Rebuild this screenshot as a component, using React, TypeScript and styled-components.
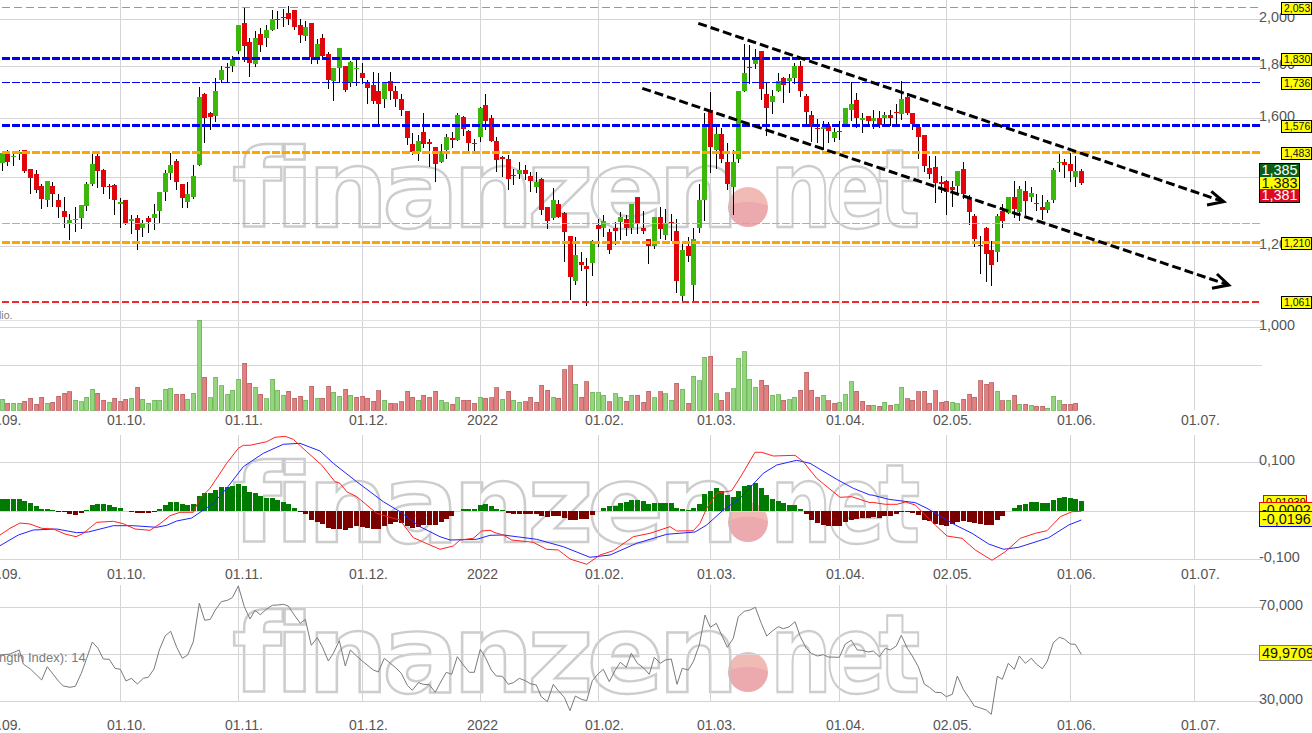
import React from "react";
import styled, { createGlobalStyle } from "styled-components";

const GlobalStyle = createGlobalStyle`
  html, body { margin: 0; padding: 0; background: #fff; overflow: hidden; }
  body { font-family: "Liberation Sans", Arial, sans-serif; }
`;

const Page = styled.main`
  width: 1312px;
  height: 733px;
  display: flex;
  flex-direction: column;
  overflow: hidden;
  background: #fff;
`;
const Panel = styled.section<{ $h: number; $mt?: number }>`
  position: relative;
  flex: none;
  height: ${(p) => p.$h}px;
  margin-top: ${(p) => p.$mt ?? 0}px;
`;
const ChartSvg = styled.svg`
  position: relative;
  z-index: 1;
  display: block;
  width: 1312px;
  height: 100%;
  overflow: visible;
`;
const AxisValue = styled.text`
  font-family: "Liberation Sans", Arial, sans-serif;
  font-size: 14.4px;
  fill: #555;
`;
const Watermark = styled.div<{ $top: number }>`
  position: absolute;
  z-index: 0;
  left: 232px;
  top: ${(p) => p.$top}px;
  display: flex;
  align-items: baseline;
  font-family: "DejaVu Sans", sans-serif;
  font-weight: 700;
  font-size: 109px;
  line-height: 109px;
  letter-spacing: -6.5px;
  color: transparent;
  -webkit-text-stroke: 2.4px rgba(192, 192, 194, 0.8);
  white-space: nowrap;
`;
const WatermarkHead = styled.span`
  display: inline-block;
  transform: scaleX(1.05);
  transform-origin: 0 100%;
`;
const WatermarkTail = styled.span`
  display: inline-block;
  letter-spacing: -8px;
  transform: scaleX(0.8);
  transform-origin: 0 100%;
`;
const WatermarkDot = styled.span`
  display: inline-block;
  width: 40px;
  height: 40px;
  margin: 0 2px 0 19px;
  border-radius: 50%;
  background: radial-gradient(ellipse 95% 72% at 50% 108%, #eca9ae 97%, #f0bbb4 100%);
  -webkit-text-stroke: 0;
`;
const AxisRow = styled.div<{ $h: number; $pt?: number }>`
  flex: none;
  box-sizing: border-box;
  height: ${(p) => p.$h}px;
  padding-top: ${(p) => p.$pt ?? 0}px;
  display: flex;
  align-items: center;
  font-size: 14px;
  color: #555;
  margin-left: -2px;
  white-space: nowrap;
`;
const TickLabel = styled.span<{ $w: number }>`
  flex: none;
  width: ${(p) => p.$w}px;
`;
const LevelTag = styled.div<{ $top: number }>`
  position: absolute;
  z-index: 2;
  left: 1281px;
  right: 0;
  top: ${(p) => p.$top}px;
  height: 11px;
  border: 1px solid #000;
  background: #ffff00;
  color: #111;
  font-size: 10.5px;
  line-height: 11px;
  padding-left: 2px;
`;
const PriceStack = styled.div`
  position: absolute;
  z-index: 3;
  left: 1259px;
  top: 163px;
  width: 39px;
  display: flex;
  flex-direction: column;
  border: 1px solid #000;
`;
const PriceCell = styled.div<{ $bg: string; $fg: string }>`
  height: 12.67px;
  background: ${(p) => p.$bg};
  color: ${(p) => p.$fg};
  font-size: 14.4px;
  line-height: 13px;
  text-align: center;
`;
const ValueTag = styled.div<{ $left: number; $top: number; $h: number; $border: string; $size: number; $z: number }>`
  position: absolute;
  z-index: ${(p) => p.$z};
  left: ${(p) => p.$left}px;
  right: ${(p) => (p.$left > 1260 ? 5 : -4)}px;
  top: ${(p) => p.$top}px;
  height: ${(p) => p.$h}px;
  border: 1px solid ${(p) => p.$border};
  background: #ffff00;
  color: #111;
  font-size: ${(p) => p.$size}px;
  line-height: ${(p) => p.$h}px;
  padding-left: 2px;
  overflow: hidden;
  white-space: nowrap;
`;
const Legend = styled.div<{ $top: number; $size: number }>`
  position: absolute;
  z-index: 2;
  left: -1px;
  top: ${(p) => p.$top}px;
  color: #7c7c7c;
  font-size: ${(p) => p.$size}px;
  line-height: 14px;
  white-space: nowrap;
`;

const GRID_V = [120.5, 238.5, 362.5, 480.5, 598.5, 710.5, 839.5, 946.5, 1070.5, 1194.5];
const GRID = "#d4d4d8";

const GREEN = "#3cb80a";
const RED = "#e0060c";

// candles: zoomX colour bodyTop bodyBottom wickTop wickBottom
const CANDLES: [number, string][] = [
  [0, `7g460,488,460,512 22r455,485,450,497 40g467,470,460,497 57g455,462,450,480 73r450,513,450,518 91r507,533,507,581 109r522,570,510,580 124r558,597,552,627 142g543,600,543,622 157r558,582,545,620 175r600,621,583,653 193r633,651,590,683 208g660,670,642,720 226g657,659,621,695 244g615,654,615,687 259g552,618,546,633 277g492,552,462,558 292r468,513,462,564 310r510,561,507,582 328r558,561,552,597 343r555,600,552,645 361g606,611,594,683 376r600,669,600,675 394g657,663,645,702 412r654,690,645,750 427g670,684,660,711 445r654,666,648,699 463g642,654,612,690 478g576,633,576,672 496g519,576,510,603 511g495,519,458,540 529r483,546,477,570 547r552,594,552,624 562g582,606,546,624 580g528,591,495,597 598g291,495,261,498 613r282,354,279,429 631r339,351,336,390 646g273,348,234,366 664g210,240,198,250 682r201,204,190,247 697g178,198,168,216 715g75,153,75,162 733r69,138,22,186 748r126,189,114,231 766g114,192,93,201 781r102,135,84,156 799g90,114,75,141 817g57,90,30,93 832r57,60,33,87 850r51,54,27,81 865r39,57,18,75 883r30,81,30,90 901r75,105,57,129 916g81,108,63,123 934r69,171,69,192 952g132,171,117,192 967r114,168,102,180 985r162,240,156,267 1000g204,243,204,303 1018g144,204,144,246 1036r198,270,198,276 1051g186,249,183,261 1069g203,207,180,258 1087r219,234,189,252 1102r249,264,240,312 1120r255,303,216,312 1135r273,312,219,375 1153g249,297,249,324 1171r243,273,216,300 1186r273,297,258,321 1204r297,330,282,348 1222r333,414,333,435 1237r432,456,400,465 1255g423,456,405,483 1270r396,432,340,444 1288r426,431,417,501 1306r441,492,441,546`],
  [440, `2g453,486,432,490 19g411,450,402,477 37r414,419,396,444 52g345,420,339,423 70r351,387,348,408 85r393,429,390,453 103r429,431,417,454 121g324,411,321,426 136r315,363,282,390 154r354,423,345,426 169r423,480,411,516 187r471,476,468,531 205r477,537,465,570 220r525,528,507,555 238g510,522,487,537 256r510,522,495,540 271r528,543,516,576 289g546,561,516,579 304r537,630,534,645 322r621,663,621,687 340g600,654,564,660 355r612,651,600,654 373r639,696,636,786 391r708,831,708,900 406g765,843,711,855 424r786,795,756,813 439r798,807,774,918 457g723,789,720,828 475r675,687,657,741 490g663,684,645,711 508r696,750,687,762 526r684,693,666,735 541g651,666,636,720 559r657,684,645,708 574g612,684,612,702 592r591,670,591,702 610r684,693,633,702 625r717,738,717,792 643g651,738,651,747 661r651,687,621,717 676g671,705,627,720 694r666,668,642,723 709r693,843,657,879 727g750,888,732,906 745r738,768,711,786 760g717,855,684,903 778g600,684,552,700 793g378,600,339,663 811r330,441,276,519 829g402,450,381,507 844r402,477,384,489 862r486,552,429,570 880g486,561,450,645 895g273,477,273,489 913g219,273,132,276 928r201,204,135,252 946g177,192,147,207 964r153,267,153,300 979r282,324,249,408 997g288,306,270,342 1015g243,273,219,276 1030r234,255,231,309 1048g234,243,222,279 1063g198,234,189,252 1081r198,273,183,291 1099r288,336,282,372 1114r345,381,333,426 1132r384,387,357,429 1150g381,387,363,450 1165r378,393,366,429 1183g396,414,384,426 1198r393,396,363,420 1216g324,372,324,380 1234g312,330,246,363 1249r300,354,279,384 1267g354,360,339,399 1285r348,363,348,375`],
  [872, `4g354,363,330,387 22r354,375,333,384 37g345,354,336,372 55r345,354,330,378 73r336,339,312,372 88g297,342,243,360 106r291,339,279,345 121r339,372,339,390 139r381,411,372,477 157r405,498,405,516 172r504,522,468,537 190r501,549,468,609 208r546,552,528,580 223r543,576,540,645 241r561,570,543,621 256g513,558,513,582 274r507,582,486,597 292r591,636,585,675 307r648,717,642,741 325r735,738,708,822 343r684,762,681,846 358r750,795,723,858 376g648,756,642,786 391r633,663,612,684 409g591,639,591,642 427r591,627,543,654 442g567,636,558,663 460r573,603,543,645 478g579,591,561,606 493r609,611,582,633 511r621,630,585,660 526g606,630,600,639 544g510,600,504,609 562g486,488,459,516 577r486,495,477,534 595r492,513,459,546 610g513,531,468,561 628r513,549,507,555`],
];

// volume: zoomX colour top (baseline 270)
const VOLUME: [number, string][] = [
  [0, `7g238 22r250 40g250 57g250 73r244 91r234 109r252 124r232 142g250 157r247 175r229 193r220 208r215 226g240 244g245 259g232 277g208 292r220 310r240 328g247 343r235 361r244 376r238 394g234 412r202 427g237 445g250 463g240 478g241 496g208 511g204 529r223 547r223 562g238 580g220 598g0 613r171 631g233 646g172 664g197 682g223 697g210 715g178 733r130 748r190 766g202 781r223 799g236 817g177 832g210 850g226 865r214 883r234 901r229 916g240 934r199 952g234 967r235 985r199 1000g217 1018g229 1036r208 1051g225 1069r232 1087r229 1102r234 1120r243 1135r212 1153g241 1171r249 1186r251 1204r245 1222r214 1237r232 1255g241 1270r226 1288r232 1306r214`],
  [440, `2g240 19g248 37r252 52g232 70r240 85r240 103r250 121g232 136r235 154r233 169r203 187g238 205r214 220g240 238g246 256r245 271r232 289r247 304r196 322r210 340g232 355r235 373r149 391r137 406g192 424r232 439r185 457g217 475g218 490g226 508r245 526g221 541g232 559r243 574g226 592r225 610r247 625r214 643g233 661r215 676g221 694g240 709r190 727g208 745r250 760g168 778g182 793g112 811r109 829g221 844r240 862r218 880g206 895g115 913g95 928g178 946g202 964r181 979r195 997g226 1015g224 1030r241 1048g239 1063g232 1081r211 1099r156 1114r211 1132r232 1150g226 1165r242 1183r250 1198g246 1216g222 1234g185 1249r214 1267r244 1285r256`],
  [872, `4g256 22r259 37g247 55r256 73g253 88g202 106r236 121r241 139r215 157r214 172r250 190r212 208r247 223r244 241g247 256g251 274r238 292r223 307r232 325r182 343r193 358r188 376g214 391r242 409g241 427r226 442g253 460r252 478g256 493r259 511r259 526g265 544g229 562g242 577r253 595r253 610r250`],
];

// MACD histogram: zoomX value, zero at 574
const HIST: [number, string][] = [
  [0, `7:537 22:537 40:537 57:537 73:543 91:548 109:558 124:567 142:567 157:570 175:576 193:577 208:581 226:584 244:579 259:571 277:556 292:552 310:552 328:555 343:561 361:564 394:577 412:579 427:579 445:579 463:576 478:568 496:556 511:546 529:546 547:552 562:554 580:552 598:528 613:519 631:519 646:510 664:501 682:501 697:498 715:492 733:498 748:516 766:519 781:528 799:534 817:534 832:540 850:546 865:552 883:564 901:577 916:582 934:600 952:606 967:612 985:624 1000:628 1018:628 1036:630 1051:624 1069:618 1087:621 1102:624 1120:627 1135:627 1153:618 1171:612 1186:606 1204:609 1222:618 1237:624 1255:621 1270:615 1288:615 1306:615`],
  [440, `2:606 19:597 34:588 70:567 85:567 103:567 121:555 136:552 154:558 169:567 187:571 205:579 220:582 238:582 256:582 271:582 289:582 304:588 322:591 340:588 355:588 373:594 391:600 406:600 424:597 439:597 457:585 490:564 508:559 526:558 541:549 559:546 574:540 592:540 610:543 625:552 643:549 661:549 676:549 694:549 709:564 727:567 745:570 760:564 778:552 793:522 811:513 829:504 844:513 862:525 880:531 895:513 913:498 928:495 946:489 964:504 979:525 997:537 1015:543 1030:549 1048:555 1063:555 1081:567 1099:582 1114:600 1132:609 1150:615 1165:618 1183:618 1198:618 1216:606 1234:600 1249:597 1267:594 1285:594`],
  [872, `4:591 22:594 37:587 55:587 73:582 88:576 106:576 121:579 139:585 157:600 172:603 190:612 208:615 223:618 241:612 256:606 274:603 292:606 307:609 325:612 343:615 358:615 376:600 391:588 427:564 442:555 460:552 478:546 493:546 511:549 526:549 544:540 562:534 577:531 595:534 610:537 628:543`],
];

const MACD_RED: [number, string][] = [
  [0, `0,645 30,625 60,609 90,612 125,625 160,627 195,642 228,650 250,640 290,607 340,604 370,611 405,627 450,631 480,611 510,587 540,577 580,577 600,535 630,505 680,430 715,385 730,376 750,376 800,365 825,352 855,349 880,358 920,395 965,435 1005,485 1020,490 1040,515 1070,530 1130,580 1170,592 1200,600 1240,653 1290,675 1320,688`],
  [440, `40,678 60,660 100,655 125,633 150,631 165,638 190,645 215,660 280,667 320,688 355,690 390,717 440,733 480,705 520,692 580,650 630,640 690,620 710,633 760,632 780,610 800,565 830,520 875,512 905,465 945,397 965,397 1000,408 1065,406 1090,425 1130,475 1200,532 1235,530 1290,548`],
  [872, `0,547 40,553 75,553 100,546 130,555 190,615 225,648 270,655 310,690 360,721 400,695 445,655 490,640 525,632 565,590 600,575 628,574`],
];
const MACD_BLUE: [number, string][] = [
  [0, `0,677 55,645 100,630 170,627 230,638 265,636 340,617 400,617 470,622 500,616 530,603 575,594 640,550 680,505 730,440 790,400 850,373 900,370 960,393 1000,430 1070,485 1150,545 1200,575 1260,620 1320,650`],
  [440, `30,660 110,658 150,646 190,645 290,658 370,680 450,712 510,705 590,670 680,643 765,636 800,615 850,570 900,535 970,460 1010,435 1070,421 1110,430 1190,478 1240,505 1290,525`],
  [872, `0,525 50,538 130,548 165,565 250,615 300,640 350,672 395,688 440,682 530,653 590,615 628,600`],
];
const RSI: [number, string][] = [
  [0, `0,255 30,252 58,240 70,282 92,298 125,330 142,290 175,333 190,348 210,352 226,349 244,310 260,265 277,216 294,235 310,267 328,268 345,295 361,298 378,333 394,325 412,342 430,325 445,322 462,297 478,240 496,197 512,184 530,232 547,265 563,255 580,215 598,100 614,151 631,148 646,120 664,95 682,91 697,83 715,48 733,110 750,147 765,121 781,134 799,118 817,106 832,105 850,103 865,108 883,135 901,160 916,148 934,226 952,203 967,230 985,273 1000,250 1018,212 1036,288 1051,240 1069,257 1087,273 1120,300 1135,306 1153,265 1171,280 1186,292 1204,310 1222,346 1237,361 1255,338 1270,343 1288,344 1306,367 1320,340`],
  [440, `19,307 35,313 52,260 70,285 88,307 103,307 121,238 136,262 154,300 169,318 187,319 205,343 220,338 238,325 256,332 271,341 289,345 304,380 322,395 340,343 355,362 373,382 390,422 406,378 424,388 440,392 457,332 475,311 490,298 508,335 526,300 541,277 559,292 574,250 592,280 610,293 628,313 643,262 661,280 676,270 694,267 711,343 727,295 745,300 760,275 778,225 795,135 811,172 829,160 862,232 880,205 895,140 913,124 930,120 946,112 964,160 980,198 997,183 1015,170 1030,176 1048,170 1065,155 1081,200 1099,235 1114,250 1132,258 1150,254 1165,261 1198,262 1216,222 1234,211 1252,240 1267,241 1285,246`],
  [872, `4,243 22,260 40,235 55,240 73,228 88,196 106,235 121,258 139,290 157,342 172,352 190,367 208,368 223,380 241,373 256,318 274,358 292,385 307,408 325,414 343,420 358,433 376,319 391,328 409,280 427,298 442,258 460,280 478,265 493,282 511,296 526,274 544,218 562,202 577,207 595,222 610,223 628,253`],
];

const items = (segs: [number, string][]) =>
  segs.flatMap(([o, s]) => s.trim().split(/\s+/).map((t) => ({ o, t })));

const candles = items(CANDLES).map(({ o, t }) => {
  const m = t.match(/^(\d+)([gr])(\d+),(\d+),(\d+),(\d+)$/)!;
  return { x: o + +m[1] / 3, c: m[2], bt: +m[3] / 3, bb: +m[4] / 3, wt: +m[5] / 3, wb: +m[6] / 3 };
});
const volumes = items(VOLUME).map(({ o, t }) => {
  const m = t.match(/^(\d+)([gr])(\d+)$/)!;
  return { x: o + +m[1] / 3, c: m[2], top: +m[3] / 3 };
});
const hist = items(HIST).map(({ o, t }) => {
  const [a, b] = t.split(":").map(Number);
  return { x: o + a / 3, v: b };
});
const line = (segs: [number, string][], dy: number) =>
  items(segs)
    .map(({ o, t }) => {
      const [a, b] = t.split(",").map(Number);
      return `${(o + a / 3).toFixed(1)},${(b / 3 + dy).toFixed(1)}`;
    })
    .join(" ");

const LEVELS = [
  { y: 7.5, color: "#33e033", w: 1, dash: "8 4" },
  { y: 58.5, color: "#0000f5", w: 3, dash: "8 2" },
  { y: 82.5, color: "#0000f5", w: 1, dash: "8 2" },
  { y: 125.5, color: "#0000f5", w: 3, dash: "8 2" },
  { y: 152.5, color: "#ffa500", w: 3, dash: "8 2" },
  { y: 223.5, color: "#f5a623", w: 1, dash: "8 2" },
  { y: 242.5, color: "#ffa500", w: 3, dash: "8 2" },
  { y: 301.5, color: "#f02a2a", w: 2, dash: "7 3" },
];

const VGrid = ({ y1, y2 }: { y1: number; y2: number }) => (
  <g stroke={GRID} strokeWidth={1} shapeRendering="crispEdges">
    {GRID_V.map((x) => (
      <line key={x} x1={x} x2={x} y1={y1} y2={y2} />
    ))}
  </g>
);
const HGrid = ({ ys, color = GRID }: { ys: number[]; color?: string }) => (
  <g stroke={color} strokeWidth={1} shapeRendering="crispEdges">
    {ys.map((y) => (
      <line key={y} x1={0} x2={1262} y1={y} y2={y} />
    ))}
  </g>
);

const Candles = () => (
  <g shapeRendering="crispEdges">
    {candles.map((k, i) => {
      const cx = Math.round(k.x);
      const fill = k.c === "g" ? GREEN : RED;
      const top = Math.round(k.bt);
      return (
        <g key={i}>
          <rect x={cx} y={k.wt} width={1} height={k.wb - k.wt} fill="#000" />
          <rect x={cx - 2} y={top} width={5} height={Math.max(1, Math.round(k.bb) - top)} fill={fill} />
        </g>
      );
    })}
  </g>
);
const Volumes = () => (
  <g shapeRendering="crispEdges">
    {volumes.map((v, i) => {
      const up = v.c === "g";
      const top = 320 + v.top;
      return (
        <rect
          key={i}
          x={Math.round(v.x) - 1.5}
          y={top}
          width={4}
          height={410 - top}
          fill={up ? "#93d67e" : "#e68080"}
          stroke={up ? "#6cb356" : "#b86464"}
          strokeOpacity={0.8}
        />
      );
    })}
  </g>
);
const Histogram = ({ zero }: { zero: number }) => (
  <g shapeRendering="crispEdges">
    {hist.map((b, i) => {
      const y = b.v / 3 - 115;
      const up = b.v < 574;
      return (
        <rect
          key={i}
          x={Math.round(b.x) - 2}
          y={up ? y : zero}
          width={5}
          height={Math.abs(y - zero)}
          fill={up ? "#007a00" : "#7a0000"}
        />
      );
    })}
  </g>
);
const Arrow = ({ x1, y1, x2, y2, a, b }: { x1: number; y1: number; x2: number; y2: number; a: number[]; b: number[] }) => (
  <g fill="none" stroke="#000" strokeWidth={3}>
    <line x1={x1} y1={y1} x2={x2} y2={y2} strokeDasharray="9 4" />
    <polyline points={`${a[0]},${a[1]} ${x2},${y2} ${b[0]},${b[1]}`} />
  </g>
);

const TICKS: [string, number][] = [
  [".09.", 109],
  ["01.10.", 118],
  ["01.11.", 124],
  ["01.12.", 118],
  ["2022", 118],
  ["01.02.", 112],
  ["01.03.", 129],
  ["01.04.", 107],
  ["02.05.", 124],
  ["01.06.", 124],
  ["01.07.", 60],
];
const DateAxis = ({ h, pt }: { h: number; pt?: number }) => (
  <AxisRow $h={h} $pt={pt}>
    {TICKS.map(([t, w]) => (
      <TickLabel key={t} $w={w}>
        {t}
      </TickLabel>
    ))}
  </AxisRow>
);

const Mark = ({ top }: { top: number }) => (
  <Watermark $top={top} aria-hidden>
    <WatermarkHead>finanzen</WatermarkHead>
    <WatermarkDot />
    <WatermarkTail>net</WatermarkTail>
  </Watermark>
);

const Axis = ({ items: rows }: { items: [string, number][] }) => (
  <g>
    {rows.map(([t, y]) => (
      <AxisValue key={t} x={1259} y={y}>
        {t}
      </AxisValue>
    ))}
  </g>
);

const LEVEL_TAGS: [string, number][] = [
  ["2,053", 2],
  ["1,830", 53],
  ["1,736", 77],
  ["1,576", 120],
  ["1,483", 147],
  ["1,210", 237],
  ["1,061", 296],
];

export default function App() {
  return (
    <Page>
      <GlobalStyle />
      <Panel $h={410}>
        <Mark top={135} />
        <ChartSvg viewBox="0 0 1312 410">
          <VGrid y1={0} y2={410} />
          <HGrid ys={[19.5, 66.5, 118.5, 177.5, 246.5, 327.5, 365.5]} />
          <HGrid ys={[320.5]} color="#e2e2e6" />
          <Axis
            items={[
              ["2,000", 22],
              ["1,800", 69],
              ["1,600", 121],
              ["1,400", 180],
              ["1,200", 249],
              ["1,000", 330],
            ]}
          />
          <Volumes />
          <Candles />
          {LEVELS.map((l) => (
            <line key={l.y} x1={2} x2={1260} y1={l.y} y2={l.y} stroke={l.color} strokeWidth={l.w} strokeDasharray={l.dash} shapeRendering="crispEdges" />
          ))}
          <Arrow x1={698.3} y1={23.3} x2={1223.7} y2={201.7} a={[1211.3, 191.3]} b={[1207, 205]} />
          <Arrow x1={642.3} y1={88.3} x2={1228.7} y2={285} a={[1217, 274]} b={[1212, 288.3]} />
        </ChartSvg>
        {LEVEL_TAGS.map(([t, y]) => (
          <LevelTag key={t} $top={y}>
            {t}
          </LevelTag>
        ))}
        <PriceStack>
          <PriceCell $bg="#0b5f12" $fg="#fff">1,385</PriceCell>
          <PriceCell $bg="#ffff00" $fg="#111">1,383</PriceCell>
          <PriceCell $bg="#dc0a22" $fg="#fff">1,381</PriceCell>
        </PriceStack>
        <Legend $top={308} $size={10.5}>lio.</Legend>
      </Panel>
      <DateAxis h={20} />
      <Panel $h={125} $mt={5}>
        <Mark top={15} />
        <ChartSvg viewBox="0 0 1312 125">
          <VGrid y1={0} y2={125} />
          <HGrid ys={[27.5, 76.5, 124.5]} />
          <Axis
            items={[
              ["0,100", 30],
              ["-0,100", 127],
            ]}
          />
          <Histogram zero={76.3} />
          <polyline points={line(MACD_BLUE, -115)} fill="none" stroke="#2222ff" strokeWidth={1} />
          <polyline points={line(MACD_RED, -115)} fill="none" stroke="#ff2222" strokeWidth={1} />
        </ChartSvg>
        <ValueTag $left={1263} $top={60} $h={12} $border="#ff0000" $size={11} $z={2}>0,01939</ValueTag>
        <ValueTag $left={1259} $top={67} $h={14} $border="#ff0000" $size={14.4} $z={3}>-0,0002</ValueTag>
        <ValueTag $left={1259} $top={76} $h={14} $border="#0000ff" $size={14.4} $z={4}>-0,0196</ValueTag>
      </Panel>
      <DateAxis h={25} pt={3} />
      <Panel $h={117}>
        <Mark top={15} />
        <ChartSvg viewBox="0 0 1312 117">
          <VGrid y1={0} y2={117} />
          <HGrid ys={[22.5, 69.5, 116.5]} />
          <Axis
            items={[
              ["70,000", 25],
              ["30,000", 119],
            ]}
          />
          <polyline points={line(RSI, -15)} fill="none" stroke="#7a7a7a" strokeWidth={1} />
        </ChartSvg>
        <ValueTag $left={1259} $top={60} $h={14} $border="#777" $size={14.4} $z={2}>49,9709</ValueTag>
        <Legend $top={66} $size={13}>ngth Index): 14</Legend>
      </Panel>
      <DateAxis h={31} pt={14} />
    </Page>
  );
}
